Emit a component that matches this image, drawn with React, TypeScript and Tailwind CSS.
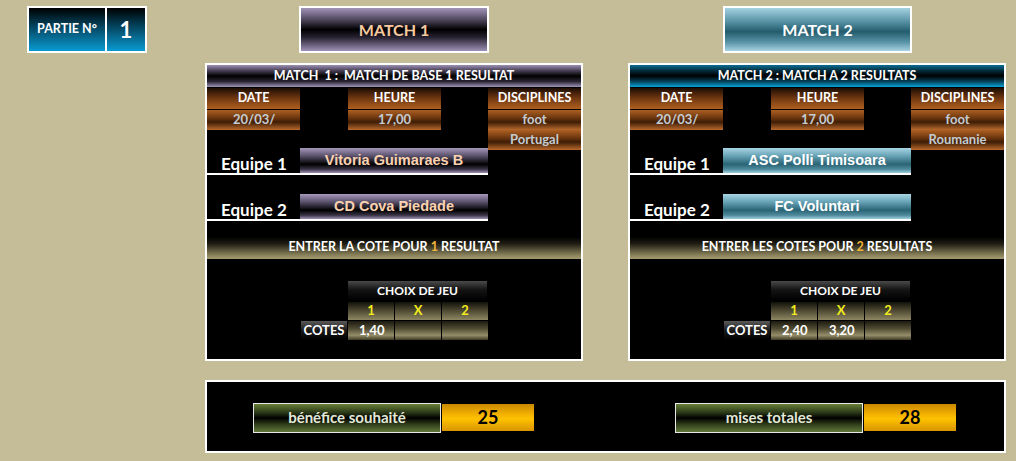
import React from 'react'

const CAL = "font-['Lato','Open_Sans',sans-serif]"
const ARIAL = "font-['Liberation_Sans',Arial,sans-serif]"

type MatchData = {
  header: string
  headerClass: string
  date: string
  heure: string
  discipline: string
  pays: string
  team1: string
  team2: string
  teamClass: string
  teamText: string
  nbResults: string
  entrer: string
  cotes: string[]
}

const orangeLabel = 'bg-[linear-gradient(to_bottom,#1c0d02_0%,#6a3410_45%,#b0601f_100%)]'
const orangeValue = 'bg-[linear-gradient(to_bottom,#ad6022_0%,#62300c_45%,#3e1d06_60%,#b8692c_100%)]'

function Panel({ m }: { m: MatchData }) {
  return (
    <div className="w-[378px] h-[298px] border-2 border-white bg-black">
      <div
        className={`h-[22px] flex items-center justify-center text-white font-bold text-[12.5px] ${m.headerClass}`}
      >
        <span className="whitespace-pre">{m.header}</span>
      </div>

      <div className="grid grid-cols-[93px_48px_93px_47px_93px] mt-[1px] h-[21px] text-white font-bold text-[12.5px]">
        <div className={`flex items-center justify-center ${orangeLabel}`}>DATE</div>
        <div />
        <div className={`flex items-center justify-center ${orangeLabel}`}>HEURE</div>
        <div />
        <div className={`flex items-center justify-center ${orangeLabel}`}>DISCIPLINES</div>
      </div>
      <div className="grid grid-cols-[93px_48px_93px_47px_93px] mt-[1px] h-[19px] text-[#c3ccd2] font-bold text-[13px]">
        <div className={`flex items-center pl-[26px] ${orangeValue}`}>{m.date}</div>
        <div />
        <div className={`flex items-center justify-center ${orangeValue}`}>{m.heure}</div>
        <div />
        <div className={`flex items-center justify-center ${orangeValue}`}>{m.discipline}</div>
      </div>
      <div className="grid grid-cols-[93px_48px_93px_47px_93px] mt-[1px] h-[18px] text-[#c3ccd2] font-bold text-[13px]">
        <div />
        <div />
        <div />
        <div />
        <div className={`flex items-center justify-center ${orangeValue}`}>{m.pays}</div>
      </div>

      <TeamRow label="Equipe 1" team={m.team1} teamClass={m.teamClass} teamText={m.teamText} />
      <div className="mt-[19px]">
        <TeamRow label="Equipe 2" team={m.team2} teamClass={m.teamClass} teamText={m.teamText} />
      </div>

      <div className="mt-[16px] h-[22px] flex items-end justify-center pb-[2px] text-white font-bold text-[12.5px] bg-[linear-gradient(to_bottom,#000_0%,#1e1c12_30%,#8e865e_85%,#a49b72_100%)]">
        <span>
          {m.entrer.split('#')[0]}
          <span className="text-[#f0b43a]">{m.nbResults}</span>
          {m.entrer.split('#')[1]}
        </span>
      </div>

      <div className="mt-[22px] ml-[141px] w-[139px] h-[19px] flex items-center justify-center text-white font-bold text-[12px] bg-[linear-gradient(to_bottom,#4a4a4a_0%,#151515_45%,#000_100%)]">
        CHOIX DE JEU
      </div>
      <div className="mt-[2px] ml-[141px] flex gap-[1px] h-[18px] text-[#f2ec1c] font-bold text-[13px]">
        {['1', 'X', '2'].map((c) => (
          <div
            key={c}
            className="w-[46px] flex items-center justify-center bg-[linear-gradient(to_bottom,#12110a_0%,#4a4630_45%,#8e8762_100%)]"
          >
            {c}
          </div>
        ))}
      </div>
      <div className="mt-[1px] ml-[94px] flex gap-[1px] h-[19px] font-bold text-[13px] text-white">
        <div className="w-[46px] flex items-center justify-center bg-[linear-gradient(to_bottom,#5a5a5a_0%,#1a1a1a_50%,#000_100%)]">
          COTES
        </div>
        {m.cotes.map((c, i) => (
          <div
            key={i}
            className="w-[46px] flex items-center pl-[11px] bg-[linear-gradient(to_bottom,#1c1a10_0%,#4f4b33_40%,#958d68_75%,#3e3a26_100%)]"
          >
            {c}
          </div>
        ))}
      </div>
    </div>
  )
}

function TeamRow({
  label,
  team,
  teamClass,
  teamText,
}: {
  label: string
  team: string
  teamClass: string
  teamText: string
}) {
  return (
    <div className="flex w-[281px] border-b-2 border-white">
      <div className="w-[93px] flex items-end pl-[14px] pb-[1px] text-white font-bold text-[17px] leading-none">
        {label}
      </div>
      <div
        className={`w-[188px] h-[25px] flex items-center justify-center font-bold text-[14.5px] ${ARIAL} ${teamClass} ${teamText}`}
      >
        {team}
      </div>
    </div>
  )
}

const matches: MatchData[] = [
  {
    header: 'MATCH  1 :  MATCH DE BASE 1 RESULTAT',
    headerClass: 'bg-[linear-gradient(to_bottom,#9d90b4_0%,#4a4258_25%,#000_50%,#2a2533_75%,#a395bb_100%)]',
    date: '20/03/',
    heure: '17,00',
    discipline: 'foot',
    pays: 'Portugal',
    team1: 'Vitoria Guimaraes B',
    team2: 'CD Cova Piedade',
    teamClass: 'bg-[linear-gradient(to_bottom,#a598bb_0%,#5e5570_30%,#000_65%,#3a3447_85%,#a193b6_100%)]',
    teamText: 'text-[#fbd2b0]',
    nbResults: '1',
    entrer: 'ENTRER LA COTE POUR # RESULTAT',
    cotes: ['1,40', '', ''],
  },
  {
    header: 'MATCH 2 : MATCH A 2 RESULTATS',
    headerClass: 'bg-[linear-gradient(to_bottom,#0c6f96_0%,#03222f_30%,#000_50%,#04435c_75%,#0aa2d6_100%)]',
    date: '20/03/',
    heure: '17,00',
    discipline: 'foot',
    pays: 'Roumanie',
    team1: 'ASC Polli Timisoara',
    team2: 'FC Voluntari',
    teamClass: 'bg-[linear-gradient(to_bottom,#a9d5e4_0%,#6aa5b8_30%,#2a6475_65%,#4f8a9c_85%,#9fcfe0_100%)]',
    teamText: 'text-white',
    nbResults: '2',
    entrer: 'ENTRER LES COTES POUR # RESULTATS',
    cotes: ['2,40', '3,20', ''],
  },
]

function StatBox({ label, value }: { label: string; value: string }) {
  return (
    <div className="flex items-start">
      <div className="w-[188px] h-[30px] border border-[#e8e8e8] flex items-center justify-center text-[#e2e8d6] font-bold text-[15px] bg-[linear-gradient(to_bottom,#667f38_0%,#2c3a18_30%,#000_50%,#2e3c19_72%,#61793a_100%)]">
        {label}
      </div>
      <div className="ml-[1px] mt-[1px] w-[92px] h-[27px] flex items-center justify-center text-black font-bold text-[18px] bg-[linear-gradient(to_bottom,#c98700_0%,#f0ae00_35%,#ffc200_55%,#d99400_100%)]">
        {value}
      </div>
    </div>
  )
}

export default function App() {
  return (
    <div className={`w-[1016px] h-[461px] bg-[#c4bd97] overflow-hidden ${CAL}`}>
      <div className="flex pt-[6px]">
        <div className="ml-[27px] flex h-[47px] border-2 border-white">
          <div className="w-[76px] flex items-center justify-center text-white font-bold text-[12.5px] bg-[linear-gradient(to_bottom,#000_0%,#03384e_35%,#0a9ad2_100%)]">
            PARTIE N°
          </div>
          <div className="w-[2px] bg-white" />
          <div className="w-[38px] flex items-center justify-center text-white font-bold text-[22px] bg-[linear-gradient(to_bottom,#000_0%,#03384e_35%,#0a9ad2_100%)]">
            1
          </div>
        </div>

        <div className="ml-[152px] w-[190px] h-[47px] border-2 border-white flex items-center justify-center text-[#f8caa0] font-bold text-[16px] bg-[linear-gradient(to_bottom,#a194b9_0%,#4c4459_28%,#000_50%,#262130_68%,#9f91b6_100%)]">
          MATCH 1
        </div>

        <div className="ml-[234px] w-[189px] h-[47px] border-2 border-white flex items-center justify-center text-white font-bold text-[16px] bg-[linear-gradient(to_bottom,#a4d2e2_0%,#4f8a9d_35%,#245c6d_55%,#5a95a8_80%,#a7d3e2_100%)]">
          MATCH 2
        </div>
      </div>

      <div className="flex mt-[10px] ml-[205px] gap-[45px]">
        {matches.map((m) => (
          <Panel key={m.header} m={m} />
        ))}
      </div>

      <div className="mt-[19px] ml-[205px] w-[801px] h-[73px] border-2 border-white bg-black flex items-center">
        <div className="ml-[46px] mt-[2px]">
          <StatBox label="bénéfice souhaité" value="25" />
        </div>
        <div className="ml-[141px] mt-[2px]">
          <StatBox label="mises totales" value="28" />
        </div>
      </div>
    </div>
  )
}
